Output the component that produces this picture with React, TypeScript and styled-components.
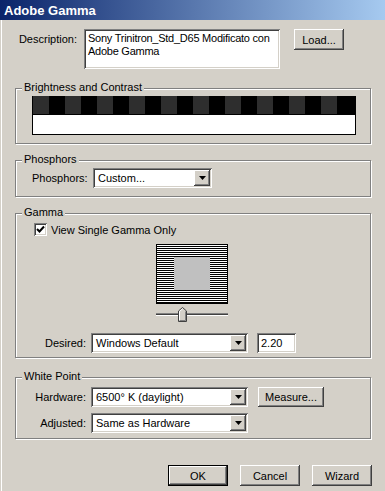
import styled, { createGlobalStyle } from 'styled-components';

const GlobalStyle = createGlobalStyle`
  html, body {
    margin: 0;
    padding: 0;
    background: #d4d0c8;
  }
  body {
    font-family: "Liberation Sans", Arial, sans-serif;
    font-size: 11px;
    color: #000;
  }
`;

const raised = `
  background: #d4d0c8;
  box-shadow: inset -1px -1px 0 #404040, inset 1px 1px 0 #fff,
    inset -2px -2px 0 #808080, inset 2px 2px 0 #d4d0c8;
`;

const sunken = `
  background: #fff;
  box-shadow: inset 1px 1px 0 #808080, inset -1px -1px 0 #fff,
    inset 2px 2px 0 #404040, inset -2px -2px 0 #d4d0c8;
`;

const Window = styled.div`
  width: 385px;
  height: 491px;
  display: flex;
  flex-direction: column;
  background: #d4d0c8;
  box-shadow: inset 1px 0 0 #d4d0c8, inset 2px 0 0 #fff;
  overflow: hidden;
`;

const TitleBar = styled.div`
  height: 20px;
  flex-shrink: 0;
  display: flex;
  align-items: center;
  padding-left: 4px;
  background: linear-gradient(to right, #0a246a, #a6caf0);
  color: #fff;
  font-weight: bold;
  font-size: 13px;
`;

const Content = styled.div`
  display: flex;
  flex-direction: column;
  padding: 9px 14px 0 15px;
`;

const DescRow = styled.div`
  display: flex;
  align-items: flex-start;
`;

const Label = styled.span<{ $w: number; $gap: number; $top?: number }>`
  width: ${(p) => p.$w}px;
  margin-right: ${(p) => p.$gap}px;
  padding-top: ${(p) => p.$top ?? 0}px;
  text-align: right;
  white-space: nowrap;
  flex-shrink: 0;
`;

const TextArea = styled.div`
  ${sunken}
  width: 196px;
  height: 40px;
  box-sizing: border-box;
  padding: 3px 2px 3px 4px;
  line-height: 13px;
  letter-spacing: -0.25px;
`;

const Button = styled.button<{ $w: number; $h?: number; $default?: boolean }>`
  ${raised}
  width: ${(p) => p.$w}px;
  height: ${(p) => p.$h ?? 21}px;
  border: ${(p) => (p.$default ? '1px solid #000' : 'none')};
  padding: 0;
  margin: 0;
  font-family: inherit;
  font-size: 11px;
  color: #000;
  flex-shrink: 0;
`;

const Frame = styled.div<{ $mt: number; $pt: number; $pb: number }>`
  position: relative;
  margin-top: ${(p) => p.$mt}px;
  padding: ${(p) => p.$pt}px 0 ${(p) => p.$pb}px 16px;
  border: 1px solid #808080;
  box-shadow: inset 1px 1px 0 #fff, 1px 1px 0 #fff;
  display: flex;
  flex-direction: column;
  align-items: flex-start;
`;

const Caption = styled.span`
  position: absolute;
  top: -9px;
  left: 6px;
  padding: 0 2px;
  line-height: 14px;
  background: #d4d0c8;
`;

const Row = styled.div<{ $mt?: number }>`
  display: flex;
  align-items: center;
  margin-top: ${(p) => p.$mt ?? 0}px;
`;

const SelectBox = styled.div<{ $w: number }>`
  ${sunken}
  width: ${(p) => p.$w}px;
  height: 20px;
  box-sizing: border-box;
  display: flex;
  align-items: center;
  padding: 2px 2px 2px 5px;
`;

const SelectText = styled.span`
  flex: 1;
  white-space: nowrap;
`;

const DropButton = styled.span`
  ${raised}
  width: 16px;
  height: 16px;
  display: flex;
  align-items: center;
  justify-content: center;
`;

const Field = styled.div<{ $w: number; $ml: number }>`
  ${sunken}
  width: ${(p) => p.$w}px;
  height: 20px;
  margin-left: ${(p) => p.$ml}px;
  box-sizing: border-box;
  padding: 0 4px;
  display: flex;
  align-items: center;
`;

const CheckRow = styled.label`
  display: flex;
  align-items: center;
  gap: 4px;
  margin-left: 2px;
  height: 13px;
`;

const CheckBox = styled.span`
  ${sunken}
  width: 13px;
  height: 13px;
  display: flex;
  align-items: center;
  justify-content: center;
`;

const GammaPreview = styled.svg`
  display: block;
  margin: 8px 0 0 124px;
`;

const Slider = styled.div`
  position: relative;
  width: 72px;
  height: 18px;
  margin: 3px 0 0 124px;
`;

const Track = styled.div`
  position: absolute;
  left: 0;
  right: 0;
  top: 6px;
  height: 3px;
  background: #d4d0c8;
  box-shadow: inset 0 1px 0 #808080, inset 0 2px 0 #404040, inset 0 -1px 0 #fff;
`;

const Thumb = styled.svg`
  position: absolute;
  left: 22px;
  top: 0;
`;

const ButtonBar = styled.div`
  display: flex;
  justify-content: flex-end;
  gap: 12px;
  margin-top: 26px;
  margin-right: -1px;
`;

function Arrow() {
  return (
    <svg width="7" height="4" viewBox="0 0 7 4">
      <polygon points="0,0 7,0 3.5,4" fill="#000" />
    </svg>
  );
}

function Dropdown({ width, value }: { width: number; value: string }) {
  return (
    <SelectBox $w={width}>
      <SelectText>{value}</SelectText>
      <DropButton>
        <Arrow />
      </DropButton>
    </SelectBox>
  );
}

function BrightnessBar() {
  const squares = Array.from({ length: 10 }, (_, i) => i);
  return (
    <svg width="324" height="39" viewBox="0 0 324 39" style={{ display: 'block' }}>
      <rect x="0" y="0" width="324" height="18" fill="#000" />
      {squares.map((i) => (
        <rect key={i} x={1 + i * 32} y="0" width="16" height="18" fill="#2e2e2e" />
      ))}
      <rect x="0.5" y="18.5" width="323" height="20" fill="#fff" stroke="#000" />
    </svg>
  );
}

export default function App() {
  return (
    <>
      <GlobalStyle />
      <Window>
        <TitleBar>Adobe Gamma</TitleBar>
        <Content>
          <DescRow>
            <Label $w={62} $gap={7} $top={4}>
              Description:
            </Label>
            <TextArea>Sony Trinitron_Std_D65 Modificato con Adobe Gamma</TextArea>
            <Button $w={50} style={{ marginLeft: 14 }}>
              Load...
            </Button>
          </DescRow>

          <Frame $mt={19} $pt={7} $pb={8}>
            <Caption>Brightness and Contrast</Caption>
            <BrightnessBar />
          </Frame>

          <Frame $mt={16} $pt={7} $pb={8}>
            <Caption>Phosphors</Caption>
            <Row>
              <Label $w={53} $gap={8}>
                Phosphors:
              </Label>
              <Dropdown width={119} value="Custom..." />
            </Row>
          </Frame>

          <Frame $mt={16} $pt={9} $pb={4}>
            <Caption>Gamma</Caption>
            <CheckRow>
              <CheckBox>
                <svg width="9" height="9" viewBox="0 0 9 9">
                  <path d="M1 4 L3.5 6.5 L8 1.5" stroke="#000" strokeWidth="2" fill="none" />
                </svg>
              </CheckBox>
              View Single Gamma Only
            </CheckRow>
            <GammaPreview width="72" height="60" viewBox="0 0 72 60">
              <defs>
                <pattern id="lines" width="2" height="2" patternUnits="userSpaceOnUse">
                  <rect width="2" height="1" fill="#000" />
                  <rect y="1" width="2" height="1" fill="#fff" />
                </pattern>
              </defs>
              <rect width="72" height="60" fill="url(#lines)" />
              <rect x="18" y="13" width="36" height="33" fill="#c0c0c0" />
              <rect x="0.5" y="0.5" width="71" height="59" fill="none" stroke="#000" />
            </GammaPreview>
            <Slider>
              <Track />
              <Thumb width="9" height="15" viewBox="0 0 9 15">
                <polygon points="0.5,4 4.5,0.5 8.5,4 8.5,14.5 0.5,14.5" fill="#d4d0c8" stroke="#404040" />
                <polyline points="1.5,14 1.5,4.5 4.5,1.8" fill="none" stroke="#fff" />
                <polyline points="7.5,4.5 7.5,13.5 1.5,13.5" fill="none" stroke="#808080" />
              </Thumb>
            </Slider>
            <Row $mt={8}>
              <Label $w={54} $gap={5}>
                Desired:
              </Label>
              <Dropdown width={157} value="Windows Default" />
              <Field $w={39} $ml={9}>
                2.20
              </Field>
            </Row>
          </Frame>

          <Frame $mt={19} $pt={9} $pb={5}>
            <Caption>White Point</Caption>
            <Row>
              <Label $w={54} $gap={5}>
                Hardware:
              </Label>
              <Dropdown width={157} value="6500° K (daylight)" />
              <Button $w={66} $h={20} style={{ marginLeft: 10 }}>
                Measure...
              </Button>
            </Row>
            <Row $mt={6}>
              <Label $w={54} $gap={5}>
                Adjusted:
              </Label>
              <Dropdown width={157} value="Same as Hardware" />
            </Row>
          </Frame>

          <ButtonBar>
            <Button $w={60} $default>
              OK
            </Button>
            <Button $w={60}>Cancel</Button>
            <Button $w={60}>Wizard</Button>
          </ButtonBar>
        </Content>
      </Window>
    </>
  );
}
